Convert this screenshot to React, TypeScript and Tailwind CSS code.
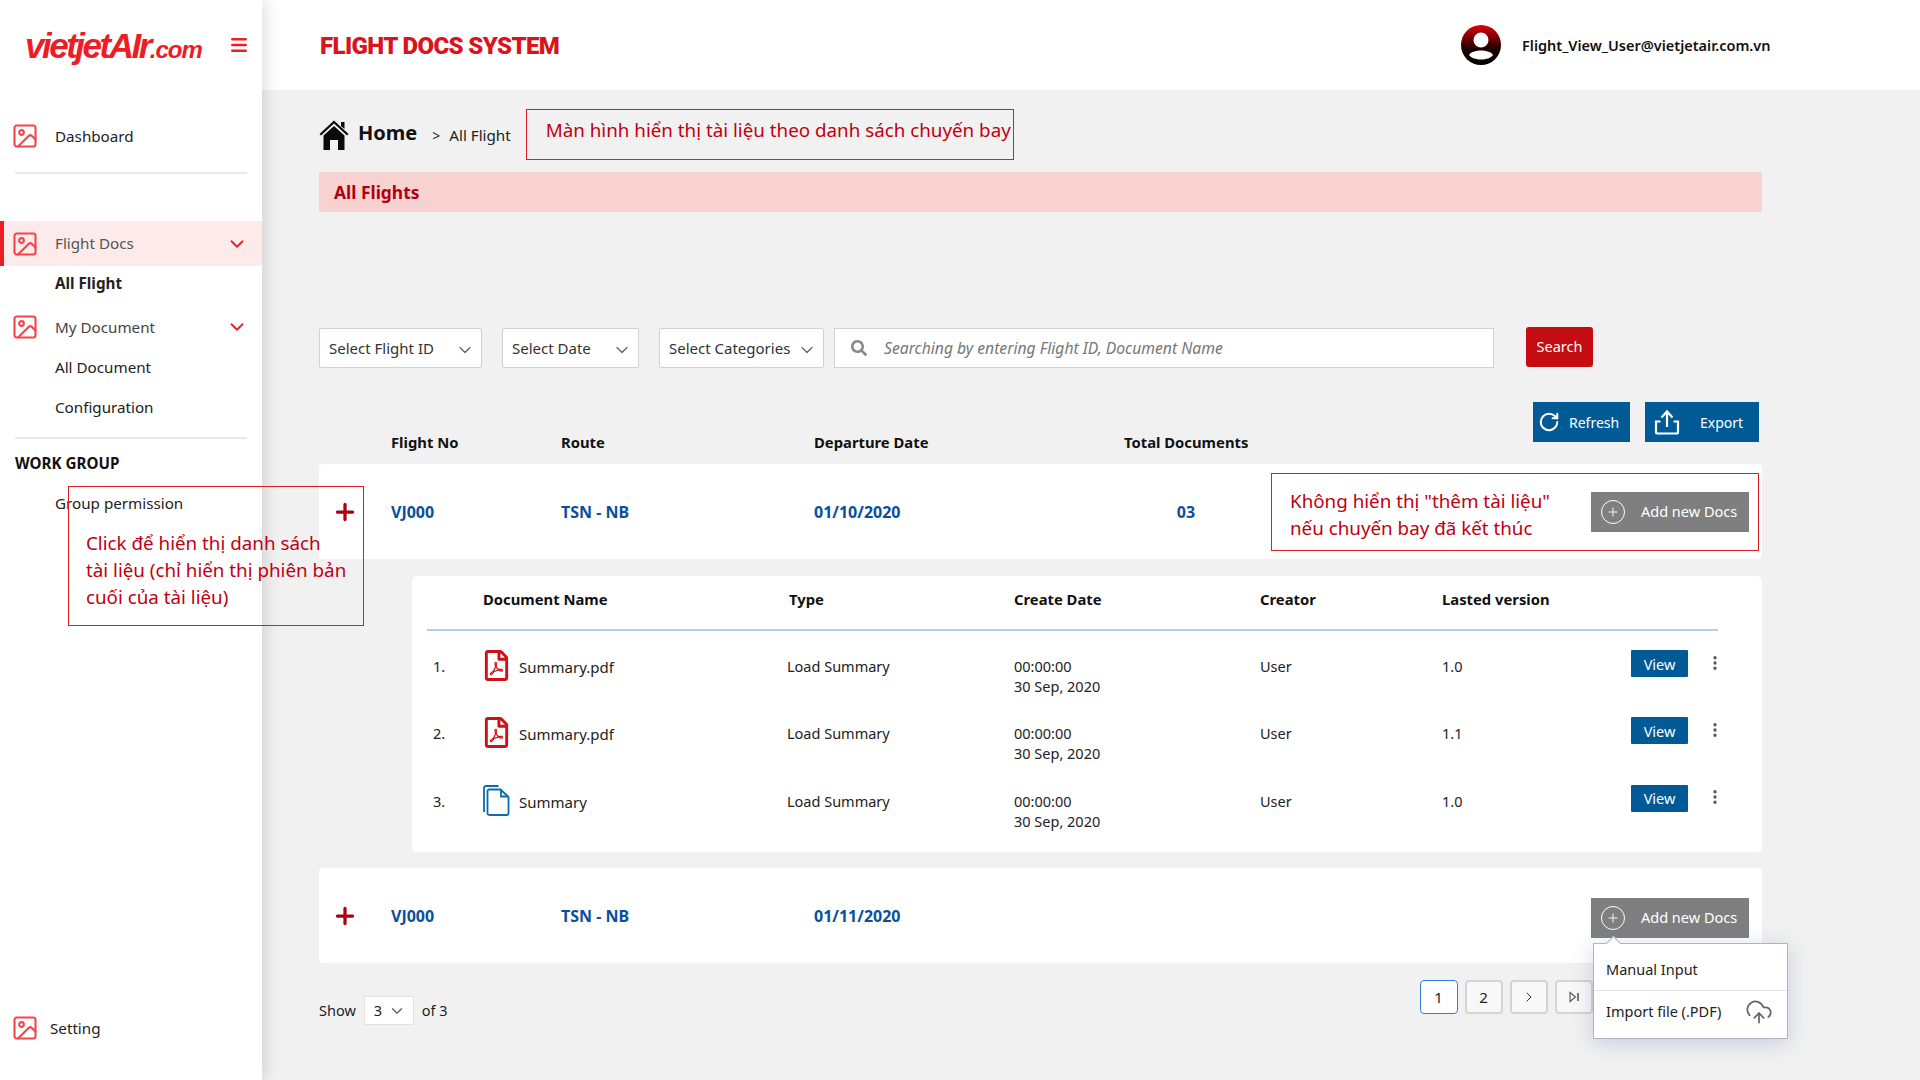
import { ChevronDown, ChevronRight, CloudUpload, EllipsisVertical, Image, Menu, Plus, RotateCw } from 'lucide-react';
import { FaRegFilePdf, FaSearch } from 'react-icons/fa';

const docs = [
  { no: '1.', name: 'Summary.pdf', pdf: true, version: '1.0' },
  { no: '2.', name: 'Summary.pdf', pdf: true, version: '1.1' },
  { no: '3.', name: 'Summary', pdf: false, version: '1.0' },
];

function NavIcon() {
  return <Image size={28} strokeWidth={1.8} className="text-[#f4444c] shrink-0" />;
}

function HomeIcon() {
  return (
    <svg width="30" height="30" viewBox="0 0 30 30" fill="#0b0b0b">
      <path d="M15 0.500 L29.500 14 L28 15.500 L15 3.500 L2 15.500 L0.500 14 Z" />
      <path d="M22 2 H25.500 V9 L22 6 Z" />
      <path d="M4.500 15.500 L15 6 L25.500 15.500 V30 H19 V20 H11 V30 H4.500 Z" />
    </svg>
  );
}

function Avatar() {
  return (
    <svg width="40" height="40" viewBox="0 0 40 40">
      <defs>
        <linearGradient id="avatar-grad" x1="0" y1="0" x2="0" y2="1">
          <stop offset="0" stopColor="#e00008" />
          <stop offset="0.6" stopColor="#1a0000" />
          <stop offset="1" stopColor="#000" />
        </linearGradient>
      </defs>
      <circle cx="20" cy="20" r="20" fill="url(#avatar-grad)" />
      <circle cx="20" cy="15" r="7.500" fill="#fff" />
      <path d="M8 30 C11 24 29 24 32 30 C28 36 12 36 8 30 Z" fill="#fff" />
    </svg>
  );
}

function ExportIcon() {
  return (
    <svg width="26" height="26" viewBox="0 0 26 26" fill="none" stroke="#fff" strokeWidth="2.200">
      <path d="M13 18 V3 M7.500 8.500 L13 2.500 L18.500 8.500" />
      <path d="M6.500 12.500 H2 V23 a1.500 1.500 0 0 0 1.500 1.500 H22.500 a1.500 1.500 0 0 0 1.500 -1.500 V12.500 H19.500" />
    </svg>
  );
}

function CopyIcon() {
  return (
    <svg width="27" height="31" viewBox="0 0 27 31" fill="none" stroke="#0f6aa8" strokeWidth="1.800">
      <path d="M15.500 1 H3 a2 2 0 0 0 -2 2 V27" />
      <path d="M6 4.500 H17.500 L25.500 12 V28 a2 2 0 0 1 -2 2 H6 a2 2 0 0 1 -1.500 -2 V6 a2 2 0 0 1 1.500 -1.500 Z" />
      <path d="M18 5 V11.500 H25" />
    </svg>
  );
}

function LastPageIcon() {
  return (
    <svg width="12" height="12" viewBox="0 0 12 12" fill="none" stroke="#555" strokeWidth="1.100">
      <path d="M2 1.500 L7.500 6 L2 10.500 Z" />
      <path d="M10 2 V10" strokeWidth="1.600" />
    </svg>
  );
}

function SelectBox({ label, width }: { label: string; width: string }) {
  return (
    <div className={`${width} h-[40px] bg-white border border-[#d2d2d2] rounded-[2px] flex items-center justify-between pl-[9px] pr-[6px] text-[15px] text-[#333]`}>
      <span className="mt-[1px]">{label}</span>
      <ChevronDown size={20} strokeWidth={1.6} className="text-[#666] mt-[3px]" />
    </div>
  );
}

function AddDocsButton() {
  return (
    <button className="w-[158px] h-[40px] bg-[#7f7f7f] text-white text-[14.5px] font-normal flex items-center pl-[10px]">
      <span className="w-[24px] h-[24px] rounded-full border-[1.5px] border-white flex items-center justify-center mr-[16px]">
        <Plus size={14} strokeWidth={1.6} />
      </span>
      Add new Docs
    </button>
  );
}

function FlightRow({ date, total, children }: { date: string; total?: string; children: React.ReactNode }) {
  return (
    <div className="relative h-[95px] bg-white rounded-[4px] flex items-center text-[16px] font-bold text-[#0a4f9c]">
      <Plus size={26} strokeWidth={3} className="absolute left-[13px] top-[35px] text-[#b00010]" />
      <span className="ml-[72px] w-[170px]">VJ000</span>
      <span className="w-[253px]">TSN - NB</span>
      <span className="w-[310px]">{date}</span>
      {total && <span className="w-[124px] text-center">{total}</span>}
      {children}
    </div>
  );
}

function PageButton({ children, active }: { children: React.ReactNode; active?: boolean }) {
  return (
    <button className={`w-[38px] h-[34px] rounded-[4px] flex items-center justify-center text-[15px] text-[#222] ${active ? 'border border-[#2f7fe0] bg-white' : 'border-2 border-[#d4d4d4] bg-[#f8f8f8]'}`}>
      {children}
    </button>
  );
}

export default function App() {
  return (
    <div className="relative flex w-[1920px] h-[1080px] overflow-hidden bg-[#f1f1f1] font-['Noto_Sans',sans-serif] text-[#222]">
      <aside className="relative z-10 w-[262px] shrink-0 bg-white shadow-[4px_0_14px_rgba(0,0,0,0.12)] flex flex-col text-[15.2px]">
        <div className="h-[90px] flex items-center pl-[25px] pr-[13px] justify-between">
          <span className="font-['Liberation_Sans',sans-serif] font-bold italic text-[#ee1c25] text-[35px] tracking-[-2.5px] leading-none whitespace-nowrap">
            vietjetAIr<span className="text-[24px] tracking-[-1px]">.com</span>
          </span>
          <Menu size={20} strokeWidth={3} className="text-[#ee1c25]" />
        </div>
        <div className="h-[52px] mt-[20px] flex items-center pl-[11px] gap-[16px]">
          <NavIcon />
          <span>Dashboard</span>
        </div>
        <div className="h-[2px] mx-[15px] bg-[#e8e8e8] mt-[10px]" />
        <div className="h-[45px] mt-[47px] bg-[#fdeaea] border-l-4 border-[#ee1c25] flex items-center pl-[7px] gap-[16px] pr-[14px]">
          <NavIcon />
          <span className="flex-1 text-[#555]">Flight Docs</span>
          <ChevronDown size={22} strokeWidth={2} className="text-[#ee1c25]" />
        </div>
        <div className="h-[35px] pl-[55px] flex items-center font-bold">All Flight</div>
        <div className="h-[40px] mt-[6px] flex items-center pl-[11px] gap-[16px] pr-[14px]">
          <NavIcon />
          <span className="flex-1 text-[#444]">My Document</span>
          <ChevronDown size={22} strokeWidth={2} className="text-[#ee1c25]" />
        </div>
        <div className="h-[40px] pl-[55px] flex items-center">All Document</div>
        <div className="h-[40px] pl-[55px] flex items-center">Configuration</div>
        <div className="h-[2px] mx-[15px] bg-[#e8e8e8] mt-[10px]" />
        <div className="h-[48px] pl-[15px] flex items-center font-bold text-[#111]">WORK GROUP</div>
        <div className="h-[32px] pl-[55px] flex items-center">Group permission</div>
        <div className="mt-auto mb-[38px] flex items-center pl-[11px] gap-[11px]">
          <NavIcon />
          <span>Setting</span>
        </div>
      </aside>

      <main className="flex-1 min-w-0">
        <header className="h-[90px] bg-white flex items-center pl-[58px]">
          <h1 className="font-['Roboto',sans-serif] font-black text-[24px] text-[#d8141c] tracking-[-0.6px] w-[1141px] mt-[1px]">FLIGHT DOCS SYSTEM</h1>
          <Avatar />
          <span className="ml-[21px] mt-[1px] text-[14.5px] font-semibold text-[#111]">Flight_View_User@vietjetair.com.vn</span>
        </header>

        <div className="ml-[57px] w-[1443px]">
          <div className="pt-[19px] flex items-center">
            <HomeIcon />
            <span className="ml-[9px] text-[20px] font-bold text-[#111] -mt-[3px]">Home</span>
            <span className="ml-[15px] text-[14px] mt-[1px]">&gt;</span>
            <span className="ml-[9px] text-[15.200px] mt-[1px]">All Flight</span>
            <div className="ml-[15px] h-[51px] w-[488px] border border-[#e01b24] pl-[19px] pt-[7px] text-[18.8px] leading-[26px] text-[#c00010] whitespace-nowrap">
              Màn hình hiển thị tài liệu theo danh sách chuyến bay
            </div>
          </div>

          <div className="mt-[12px] h-[40px] bg-[#f8d1d1] flex items-center pl-[15px] pt-[1px] text-[17.4px] font-bold text-[#b00010]">All Flights</div>

          <div className="mt-[116px] flex items-center h-[40px]">
            <SelectBox label="Select Flight ID" width="w-[163px]" />
            <div className="w-[20px]" />
            <SelectBox label="Select Date" width="w-[137px]" />
            <div className="w-[20px]" />
            <SelectBox label="Select Categories" width="w-[165px]" />
            <div className="w-[10px]" />
            <div className="w-[660px] h-[40px] bg-white border border-[#d2d2d2] flex items-center pl-[16px]">
              <FaSearch size={16} className="text-[#888] shrink-0" />
              <input
                readOnly
                placeholder="Searching by entering Flight ID, Document Name"
                className="ml-[17px] mt-[2px] flex-1 outline-none italic text-[15.700px] placeholder:text-[#777]"
              />
            </div>
            <button className="ml-[32px] w-[67px] h-[40px] -mt-[2px] rounded-[3px] bg-[#c40c12] text-white text-[14.5px]">Search</button>
          </div>

          <div className="relative h-[96px] flex items-end pb-[11px] text-[14.8px] font-bold text-[#111]">
            <span className="ml-[72px] w-[170px]">Flight No</span>
            <span className="w-[253px]">Route</span>
            <span className="w-[310px]">Departure Date</span>
            <span>Total Documents</span>
            <div className="ml-auto self-start mt-[34px] mr-[3px] flex gap-[15px] font-normal text-white text-[14px]">
              <button className="w-[97px] h-[40px] bg-[#005a96] flex items-center pl-[5px] gap-[9px]">
                <RotateCw size={22} strokeWidth={2.2} />
                Refresh
              </button>
              <button className="w-[114px] h-[40px] bg-[#005a96] flex items-center pl-[9px] gap-[20px]">
                <ExportIcon />
                Export
              </button>
            </div>
          </div>

          <FlightRow date="01/10/2020" total="03">
            <div className="absolute right-[3px] top-[9px] w-[488px] h-[78px] border border-[#e01b24] flex items-center justify-between pl-[18px] pr-[9px] bg-white">
              <p className="mt-[5px] font-normal text-[18.8px] leading-[27px] text-[#c00010]">
                Không hiển thị "thêm tài liệu"
                <br />
                nếu chuyến bay đã kết thúc
              </p>
              <AddDocsButton />
            </div>
          </FlightRow>

          <div className="ml-[93px] mt-[17px] h-[276px] bg-white rounded-[5px] px-[15px] pr-[44px] text-[14.5px]">
            <div className="h-[55px] pb-[7px] border-b-2 border-[#b5d0e4] grid grid-cols-[56px_304px_227px_246px_182px_189px] items-center font-bold text-[14.8px] text-[#111]">
              <span />
              <span>Document Name</span>
              <span className="pl-[2px]">Type</span>
              <span>Create Date</span>
              <span>Creator</span>
              <span>Lasted version</span>
            </div>
            <div className="pt-[19px]">
              {docs.map((doc) => (
                <div key={doc.no} className="h-[67.3px] grid grid-cols-[56px_304px_227px_246px_182px_189px_auto] items-start leading-[20px]">
                  <span className="mt-[6px] pl-[6px]">{doc.no}</span>
                  <div className="flex items-start">
                    <div className="w-[36px] h-[31px] shrink-0">
                      {doc.pdf ? <FaRegFilePdf size={31} className="text-[#cc1218] -ml-[2px]" /> : <CopyIcon />}
                    </div>
                    <span className="mt-[7px] text-[15px]">{doc.name}</span>
                  </div>
                  <span className="mt-[6px]">Load Summary</span>
                  <span className="mt-[6px]">
                    00:00:00
                    <br />
                    30 Sep, 2020
                  </span>
                  <span className="mt-[6px]">User</span>
                  <span className="mt-[6px]">{doc.version}</span>
                  <div className="flex items-center w-[100px]">
                    <button className="w-[57px] h-[27px] bg-[#005a96] text-white rounded-[1px]">View</button>
                    <EllipsisVertical size={18} strokeWidth={2.4} className="ml-[18px] text-[#555] -mt-[2px]" />
                  </div>
                </div>
              ))}
            </div>
          </div>

          <div className="mt-[16px]">
            <FlightRow date="01/11/2020">
              <div className="absolute right-[13px] top-[30px]">
                <AddDocsButton />
              </div>
            </FlightRow>
          </div>

          <div className="mt-[17px] flex items-start text-[14.5px]">
            <div className="flex items-center mt-[16px]">
              <span>Show</span>
              <div className="ml-[8px] w-[50px] h-[29px] bg-white border border-[#e2e2e2] flex items-center pl-[9px] gap-[6px]">
                3
                <ChevronDown size={18} strokeWidth={1.8} className="text-[#666]" />
              </div>
              <span className="ml-[8px]">of 3</span>
            </div>
            <div className="ml-[972px] flex gap-[7px]">
              <PageButton active>1</PageButton>
              <PageButton>2</PageButton>
              <PageButton><ChevronRight size={16} strokeWidth={1.4} /></PageButton>
              <PageButton><LastPageIcon /></PageButton>
            </div>
          </div>
        </div>
      </main>

      {/* annotation laid over the sidebar and first row */}
      <div className="absolute z-20 left-[68px] top-[486px] w-[296px] h-[140px] border border-[#e01b24] pl-[17px] pt-[43px] text-[18.8px] leading-[27px] text-[#c00010]">
        Click để hiển thị danh sách
        <br />
        tài liệu (chỉ hiển thị phiên bản
        <br />
        cuối của tài liệu)
      </div>

      {/* Add new Docs dropdown */}
      <div className="absolute z-20 left-[1593px] top-[943px] w-[195px] h-[96px] bg-white border border-[#aeb4c2] shadow-[0_4px_20px_rgba(70,100,170,0.25)] text-[14.5px]">
        <div className="absolute -top-[6px] left-[14px] w-[11px] h-[11px] rotate-45 bg-white border-l border-t border-[#aeb4c2]" />
        <div className="h-[47px] flex items-center pl-[12px] pt-[5px] border-b border-[#e4e4e4]">Manual Input</div>
        <div className="h-[47px] flex items-center justify-between pl-[12px] pr-[14px] pb-[5px]">
          Import file (.PDF)
          <CloudUpload size={28} strokeWidth={1.5} className="text-[#666]" />
        </div>
      </div>
    </div>
  );
}
